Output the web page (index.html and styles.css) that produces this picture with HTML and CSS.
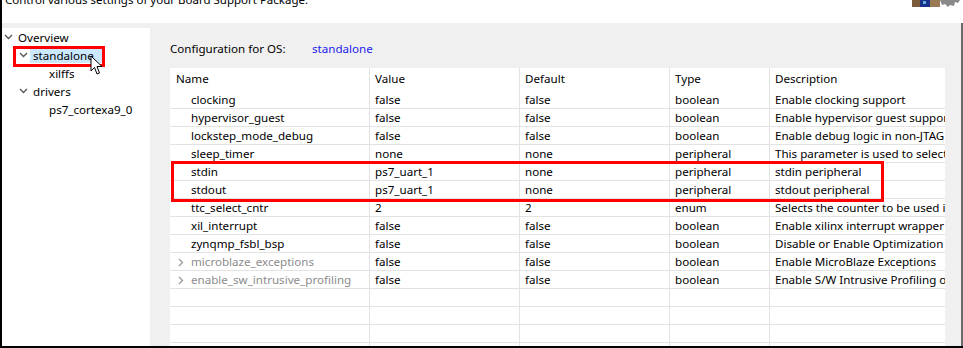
FILE: index.html
```html
<!DOCTYPE html>
<html>
<head>
<meta charset="utf-8">
<link rel="stylesheet" href="styles.css">
</head>
<body>
<div class="frame">
  <div class="topbar">
    <div class="intro">Control various settings of your Board Support Package.</div>
    <svg class="topicons" width="50" height="7" viewBox="0 0 50 7">
      <rect x="0" y="0" width="8" height="7" fill="#7a5c3a"/>
      <rect x="8" y="0" width="10" height="7" fill="#1b2f8c"/>
      <rect x="11" y="1" width="3" height="3" fill="#5fb0d8"/>
      <rect x="18" y="0" width="10" height="7" fill="#9a7a55"/>
      <path d="M28 0 H48 L46 3 L43 2 L42 6 L38 5 L36 7 L33 4 L30 5 Z" fill="#8a8a8a"/>
    </svg>
  </div>
  <div class="main">
    <div class="tree">
      <div class="node lvl0"><svg class="chev" width="9" height="6" viewBox="0 0 9 6"><polyline points="1,1 4.5,4.5 8,1" fill="none" stroke="#555" stroke-width="1.3"/></svg><span>Overview</span></div>
      <div class="node lvl1"><svg class="chev" width="9" height="6" viewBox="0 0 9 6"><polyline points="1,1 4.5,4.5 8,1" fill="none" stroke="#555" stroke-width="1.3"/></svg><span class="selected">standalone</span></div>
      <div class="node lvl2"><span>xilffs</span></div>
      <div class="node lvl1"><svg class="chev" width="9" height="6" viewBox="0 0 9 6"><polyline points="1,1 4.5,4.5 8,1" fill="none" stroke="#555" stroke-width="1.3"/></svg><span>drivers</span></div>
      <div class="node lvl2"><span>ps7_cortexa9_0</span></div>
      <div class="mark-tree"></div>
      <svg class="cursor" width="14" height="21" viewBox="0 0 14 21">
        <path d="M1 1 L1 16 L4.5 12.5 L7 19 L9.5 18 L7 11.5 L12 11.5 Z" fill="#fff" stroke="#000" stroke-width="1"/>
      </svg>
    </div>
    <div class="content">
      <div class="osline"><span class="oslabel">Configuration for OS:</span><span class="oslink">standalone</span></div>
      <div class="table">
        <div class="row head"><div>Name</div><div>Value</div><div>Default</div><div>Type</div><div>Description</div></div>
        <div class="row"><div class="nm">clocking</div><div>false</div><div>false</div><div>boolean</div><div>Enable clocking support</div></div>
        <div class="row"><div class="nm">hypervisor_guest</div><div>false</div><div>false</div><div>boolean</div><div>Enable hypervisor guest support for A53 64bit EL1 Non-Secure</div></div>
        <div class="row"><div class="nm">lockstep_mode_debug</div><div>false</div><div>false</div><div>boolean</div><div>Enable debug logic in non-JTAG boot mode</div></div>
        <div class="row"><div class="nm">sleep_timer</div><div>none</div><div>none</div><div>peripheral</div><div>This parameter is used to select specific timer</div></div>
        <div class="row"><div class="nm">stdin</div><div>ps7_uart_1</div><div>none</div><div>peripheral</div><div>stdin peripheral</div></div>
        <div class="row"><div class="nm">stdout</div><div>ps7_uart_1</div><div>none</div><div>peripheral</div><div>stdout peripheral</div></div>
        <div class="row"><div class="nm">ttc_select_cntr</div><div>2</div><div>2</div><div>enum</div><div>Selects the counter to be used in the TTC</div></div>
        <div class="row"><div class="nm">xil_interrupt</div><div>false</div><div>false</div><div>boolean</div><div>Enable xilinx interrupt wrapper API</div></div>
        <div class="row"><div class="nm">zynqmp_fsbl_bsp</div><div>false</div><div>false</div><div>boolean</div><div>Disable or Enable Optimization for FSBL</div></div>
        <div class="row"><div class="nm sub"><svg class="gt" width="6" height="9" viewBox="0 0 6 9"><polyline points="1,1 4.5,4.5 1,8" fill="none" stroke="#9a9a9a" stroke-width="1.3"/></svg><span>microblaze_exceptions</span></div><div>false</div><div>false</div><div>boolean</div><div>Enable MicroBlaze Exceptions</div></div>
        <div class="row"><div class="nm sub"><svg class="gt" width="6" height="9" viewBox="0 0 6 9"><polyline points="1,1 4.5,4.5 1,8" fill="none" stroke="#9a9a9a" stroke-width="1.3"/></svg><span>enable_sw_intrusive_profiling</span></div><div>false</div><div>false</div><div>boolean</div><div>Enable S/W Intrusive Profiling on Hardware</div></div>
        <div class="row"><div></div><div></div><div></div><div></div><div></div></div>
        <div class="row"><div></div><div></div><div></div><div></div><div></div></div>
        <div class="row"><div></div><div></div><div></div><div></div><div></div></div>
        <div class="row"><div></div><div></div><div></div><div></div><div></div></div>
        <div class="mark-table"></div>
      </div>
    </div>
    <div class="edge"></div>
  </div>
</div>
</body>
</html>
```

FILE: styles.css
```css
html, body {
  margin: 0;
  padding: 0;
  background: #fff;
}
body {
  width: 963px;
  height: 348px;
  overflow: hidden;
  font-family: "Noto Sans", "Open Sans", sans-serif;
  font-size: 11.6px;
  color: #000;
}
.frame {
  box-sizing: border-box;
  width: 963px;
  height: 348px;
  border-left: 2px solid #000;
  border-bottom: 2px solid #000;
  display: flex;
  flex-direction: column;
  overflow: hidden;
}
.topbar {
  height: 23px;
  flex: none;
  position: relative;
  background: #fff;
  width: 958px;
}
.intro {
  font-size: 11.5px;
  line-height: 12px;
  margin-top: -6px;
  padding-left: 3px;
  color: #000;
  white-space: nowrap;
}
.topicons {
  position: absolute;
  right: -2px;
  top: 0;
}
.main {
  flex: 1;
  display: flex;
  background: #f0f0f0;
  padding-top: 5px;
  min-height: 0;
}
.tree {
  width: 148px;
  flex: none;
  background: #fff;
  position: relative;
}
.node {
  height: 18px;
  display: flex;
  align-items: center;
  white-space: nowrap;
  line-height: 15px;
}
.node.lvl0 { padding-left: 2px; }
.node.lvl1 { padding-left: 17px; }
.node.lvl2 { padding-left: 47px; }
.chev {
  margin-right: 5px;
  flex: none;
}
.node .selected {
  background: #cce8ff;
  padding: 0 10px 0 3px;
  margin-left: -3px;
  line-height: 15px;
}
.mark-tree {
  position: absolute;
  left: 11px;
  top: 18px;
  width: 86px;
  height: 15px;
  border: 3px solid #f00;
}
.cursor {
  position: absolute;
  left: 88px;
  top: 27px;
}
.content {
  flex: 1;
  padding-left: 20px;
  min-width: 0;
  overflow: hidden;
}
.osline {
  height: 40px;
  display: flex;
  align-items: center;
  white-space: nowrap;
}
.oslabel {
  width: 142px;
  flex: none;
}
.oslink {
  color: #2222ee;
}
.table {
  width: 775px;
  background: #fff;
  position: relative;
}
.row {
  display: grid;
  grid-template-columns: 199px 150px 150px 100px 176px;
  height: 18px;
  box-sizing: border-box;
  border-bottom: 1px solid #e3e3e3;
}
.row > div {
  white-space: nowrap;
  overflow: hidden;
  line-height: 17px;
  padding-left: 5px;
}
.row > div + div {
  border-left: 1px solid #e3e3e3;
}
.row > div:first-child {
  padding-left: 6px;
}
.row > div.nm {
  padding-left: 21px;
}
.row > div.sub {
  color: #8c8c8c;
  padding-left: 8px;
  display: flex;
  align-items: center;
}
.gt {
  flex: none;
  margin-right: 7px;
  margin-top: 2px;
}
.row.head {
  height: 23px;
  border-bottom: none;
}
.row.head > div {
  line-height: 22px;
}
.mark-table {
  position: absolute;
  left: 1px;
  top: 93px;
  width: 707px;
  height: 35px;
  border: 3px solid #f00;
}
.edge {
  width: 15px;
  flex: none;
  background: #f0f0f0;
  border-right: 2px solid #6b6b6b;
  margin-top: -5px;
}
```
